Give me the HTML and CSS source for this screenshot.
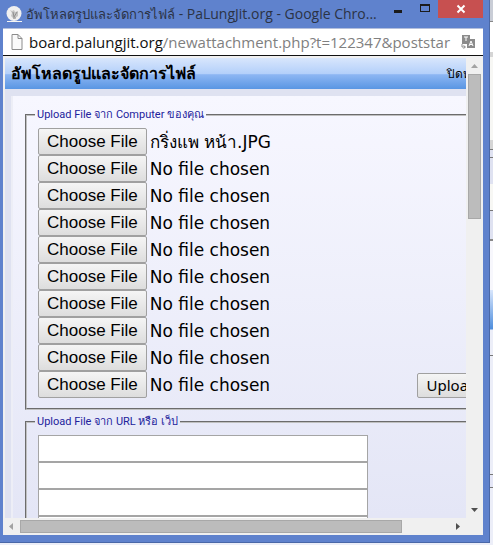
FILE: index.html
```html
<!DOCTYPE html>
<html lang="th">
<head>
  <meta charset="UTF-8" />
  <meta name="viewport" content="width=device-width, initial-scale=1.0"/>
  <title>อัพโหลดรูปและจัดการไฟล์</title>
  <link rel="stylesheet" href="styles.css">
</head>
<body>
  <div class="window">
    <div class="titlebar">
      <svg class="favicon" width="16" height="16" viewBox="0 0 16 16">
        <circle cx="8" cy="7.5" r="7.5" fill="#f0f0f0"/>
        <path d="M1 15h15v1H1z" fill="#f4f4f4"/>
        <path d="M4 4l2 3-1 3 3 3 4-3V5L9 6 8 4 6 5z" fill="#c4c4c4"/>
        <path d="M7 6l1 5 3-5M7 12h3" stroke="#8f8f8f" fill="none"/>
      </svg>
      <span class="title"><span class="title-th">อัพโหลดรูปและจัดการไฟล์</span> - PaLungJit.org - Google Chro...</span>
      <div class="window-buttons">
        <button class="win-btn" aria-label="Minimize"><svg width="10" height="10" viewBox="0 0 10 10"><path d="M1 6h8v3H1z" fill="#1b1b1b"/></svg></button>
        <button class="win-btn" aria-label="Maximize"><svg width="10" height="10" viewBox="0 0 10 10"><path d="M0 0h10v8H0zM1 2v5h8V2z" fill="#1b1b1b" fill-rule="evenodd"/></svg></button>
        <button class="win-btn close" aria-label="Close"><svg width="10" height="10" viewBox="0 0 10 10"><path d="M1.500 1.500l7 7M8.500 1.500l-7 7" stroke="#fff" stroke-width="2"/></svg></button>
      </div>
    </div>

    <div class="client">
      <div class="address">
        <svg width="12" height="16" viewBox="0 0 12 16"><path d="M1 .5h6l4 4v11H1z" fill="#fafafa" stroke="#8c8c8c"/><path d="M7 .5v4h4" fill="none" stroke="#8c8c8c"/></svg>
        <span class="url"><b>board.palungjit.org</b>/newattachment.php?t=122347&amp;poststar</span>
        <svg width="15" height="14" viewBox="0 0 15 14"><path d="M1 0h8v4h5v9H6V9H1z" fill="#8b8b8b"/><path d="M3 2h4M5 2v4" stroke="#fff"/><path d="M8 11l2-5 2 5M9 9.500h2" stroke="#fff" fill="none"/><path d="M1 9v3h3M2.500 10.500L4.500 12l-2 1.500" stroke="#8b8b8b" fill="none"/></svg>
      </div>

      <div class="view">
        <div class="viewport">
          <div class="page">
            <div class="page-head">
              <h1>อัพโหลดรูปและจัดการไฟล์</h1>
              <a class="close-link" href="#">ปิดหน้าต่าง</a>
            </div>
            <form class="panel">
              <fieldset>
                <legend>Upload File จาก Computer ของคุณ</legend>
                <div class="upload-row">
                  <div class="files">
                    <label class="file"><input type="file"><span class="file-btn">Choose File</span><span class="file-name">กริ่งแพ หน้า.JPG</span></label>
                    <label class="file"><input type="file"><span class="file-btn">Choose File</span><span class="file-name">No file chosen</span></label>
                    <label class="file"><input type="file"><span class="file-btn">Choose File</span><span class="file-name">No file chosen</span></label>
                    <label class="file"><input type="file"><span class="file-btn">Choose File</span><span class="file-name">No file chosen</span></label>
                    <label class="file"><input type="file"><span class="file-btn">Choose File</span><span class="file-name">No file chosen</span></label>
                    <label class="file"><input type="file"><span class="file-btn">Choose File</span><span class="file-name">No file chosen</span></label>
                    <label class="file"><input type="file"><span class="file-btn">Choose File</span><span class="file-name">No file chosen</span></label>
                    <label class="file"><input type="file"><span class="file-btn">Choose File</span><span class="file-name">No file chosen</span></label>
                    <label class="file"><input type="file"><span class="file-btn">Choose File</span><span class="file-name">No file chosen</span></label>
                    <label class="file"><input type="file"><span class="file-btn">Choose File</span><span class="file-name">No file chosen</span></label>
                  </div>
                  <button class="upload" type="button">Upload</button>
                </div>
              </fieldset>
              <fieldset>
                <legend>Upload File จาก URL หรือ เว็ป</legend>
                <div class="urls">
                  <input class="url-input" type="text" aria-label="URL 1">
                  <input class="url-input" type="text" aria-label="URL 2">
                  <input class="url-input" type="text" aria-label="URL 3">
                  <input class="url-input" type="text" aria-label="URL 4">
                </div>
              </fieldset>
            </form>
          </div>
        </div>
        <div class="scroll-v">
          <svg width="17" height="16" viewBox="0 0 17 16"><path d="M5 10l3.500-4 3.500 4z" fill="#a3a3a3"/></svg>
          <div class="track-v"><div class="thumb-v"></div></div>
          <svg width="17" height="17" viewBox="0 0 17 17"><path d="M5 7l3.500 4L12 7z" fill="#505050"/></svg>
        </div>
      </div>
      <div class="scroll-h">
        <svg width="17" height="17" viewBox="0 0 17 17"><path d="M10 5L6 8.500 10 12z" fill="#a3a3a3"/></svg>
        <div class="track-h"><div class="thumb-h"></div></div>
        <svg width="17" height="17" viewBox="0 0 17 17"><path d="M7 5l4 3.500L7 12z" fill="#505050"/></svg>
      </div>
    </div>
  </div>
</body>
</html>
```
FILE: styles.css
```css
* {
  box-sizing: border-box;
}
/* the page behind the popup shows as a thin strip */
body {
  margin: 0;
  padding: 0 3px 2px 0;
  height: 100vh;
  background: linear-gradient(
    #c9cdd6 0 21px, #888 21px 22px, #fff 22px 52px, #d5d5d5 52px 57px,
    #f7f7f4 57px 140px, #d5d5d5 140px 149px, #777 149px 150px,
    #dfe2f1 150px 157px, #777 157px 158px, #dfe2f1 158px 184px,
    #f7f7f4 184px 210px, #777 210px 211px, #dfe2f1 211px 239px,
    #888 239px 241px, #f7f7fc 241px 290px, #d8e6fc 290px, #4f8edd 329px,
    #eceef8 330px 355px, #777 355px 356px, #eceef8 356px 474px,
    #777 474px 475px, #e4e6f6 475px 487px, #777 487px 488px, #eceef8 488px);
  font-family: "DejaVu Sans", Verdana, sans-serif;
  overflow: hidden;
}
.window {
  height: 100%;
  display: flex;
  flex-direction: column;
  background: #5f82cd;
  padding: 0 6px 7px 3px;
  border-right: 1px solid #4a68a8;
  border-bottom: 1px solid #4a68a8;
}
svg {
  flex: none;
  display: block;
}

/* title bar */
.titlebar {
  height: 28px;
  flex: none;
  display: flex;
  align-items: center;
  padding-left: 3px;
}
.title {
  flex: 1;
  min-width: 0;
  margin-left: 4px;
  font: 14px/20px "Open Sans", "Noto Sans", sans-serif;
  color: #2b3345;
  white-space: nowrap;
}
.title-th {
  font-size: 13px;
}
.window-buttons {
  display: flex;
  align-self: flex-start;
}
.win-btn {
  width: 27px;
  height: 18px;
  padding: 0;
  border: 0;
  background: none;
  display: flex;
  align-items: center;
  justify-content: center;
}
.close {
  width: 45px;
  background: #c75050;
}

/* address bar */
.client {
  flex: 1;
  min-height: 0;
  display: flex;
  flex-direction: column;
  background: #f0f0f0;
}
.address {
  height: 28px;
  flex: none;
  display: flex;
  align-items: center;
  gap: 6px;
  padding: 0 7px 0 8px;
  background: #fff;
  border-top: 1px solid #b3bfdc;
  border-bottom: 1px solid #111;
}
.url {
  flex: 1;
  min-width: 0;
  overflow: hidden;
  font: 15px/24px "Open Sans", "Noto Sans", sans-serif;
  color: #808080;
  white-space: nowrap;
}
.url b {
  font-weight: normal;
  color: #111;
}

/* page */
.view {
  flex: 1;
  min-height: 0;
  display: flex;
  padding-top: 2px;
}
.viewport {
  flex: 1;
  min-width: 0;
  overflow: hidden;
  padding-left: 2px;
}
.page {
  width: 112%;
  background: #dfe2f1;
}
.page-head {
  height: 31px;
  display: flex;
  align-items: center;
  justify-content: space-between;
  padding: 0 14px 0 6px;
  background: linear-gradient(#d8e6fc, #b4d0fa 50%, #8db6f3 54%, #5996e3);
}
h1 {
  margin: 0;
  font-size: 16px;
  line-height: 24px;
}
.close-link {
  font-size: 12px;
  color: #000;
  text-decoration: none;
}
.panel {
  margin: 7px 6px 0;
  padding: 12px;
  border-left: 2px solid #edeef6;
  background: linear-gradient(#f7f7ff, #e4e6f6 420px);
}
fieldset {
  min-width: 0;
  margin: 0 0 5px;
  padding: 7px 11px 10px;
  border: 2px groove #c0c0c0;
}
legend {
  padding: 0 2px;
  margin-left: -3px;
  font: 11px/13px Roboto, sans-serif;
  color: #22229c;
}
.upload-row {
  display: flex;
  align-items: flex-end;
  justify-content: space-between;
}
.file {
  position: relative;
  display: flex;
  align-items: center;
  gap: 3px;
  height: 27px;
}
.file input {
  position: absolute;
  inset: 0;
  width: 100%;
  opacity: 0;
}
.file-btn,
.upload {
  height: 27px;
  border: 1px solid #a0a0a0;
  border-radius: 2px;
  background: linear-gradient(#f5f5f5, #dddddd);
  color: #000;
}
.file-btn {
  padding: 0 8px;
  font: 17px/25px "Liberation Sans", Arial, sans-serif;
}
.file-name {
  font-size: 17px;
  white-space: nowrap;
}
.upload {
  height: 25px;
  margin-right: 3px;
  padding: 0 9px;
  font: 15px/23px "Noto Sans", sans-serif;
}
.urls {
  display: flex;
  flex-direction: column;
}
.url-input {
  width: 330px;
  height: 27px;
  padding: 2px;
  border: 1px solid #a5a5a5;
  background: #fff;
}

/* scrollbars */
.scroll-v {
  width: 17px;
  display: flex;
  flex-direction: column;
}
.track-v {
  flex: 1;
  padding: 0 2px;
}
.thumb-v {
  height: 34%;
  border: 1px solid #a8a8a8;
  background: #bcbcbc;
}
.scroll-h {
  height: 17px;
  flex: none;
  display: flex;
  padding-right: 17px;
}
.track-h {
  flex: 1;
  padding: 2px 0;
}
.thumb-h {
  width: 89%;
  height: 100%;
  border: 1px solid #a8a8a8;
  background: #bcbcbc;
}
```
